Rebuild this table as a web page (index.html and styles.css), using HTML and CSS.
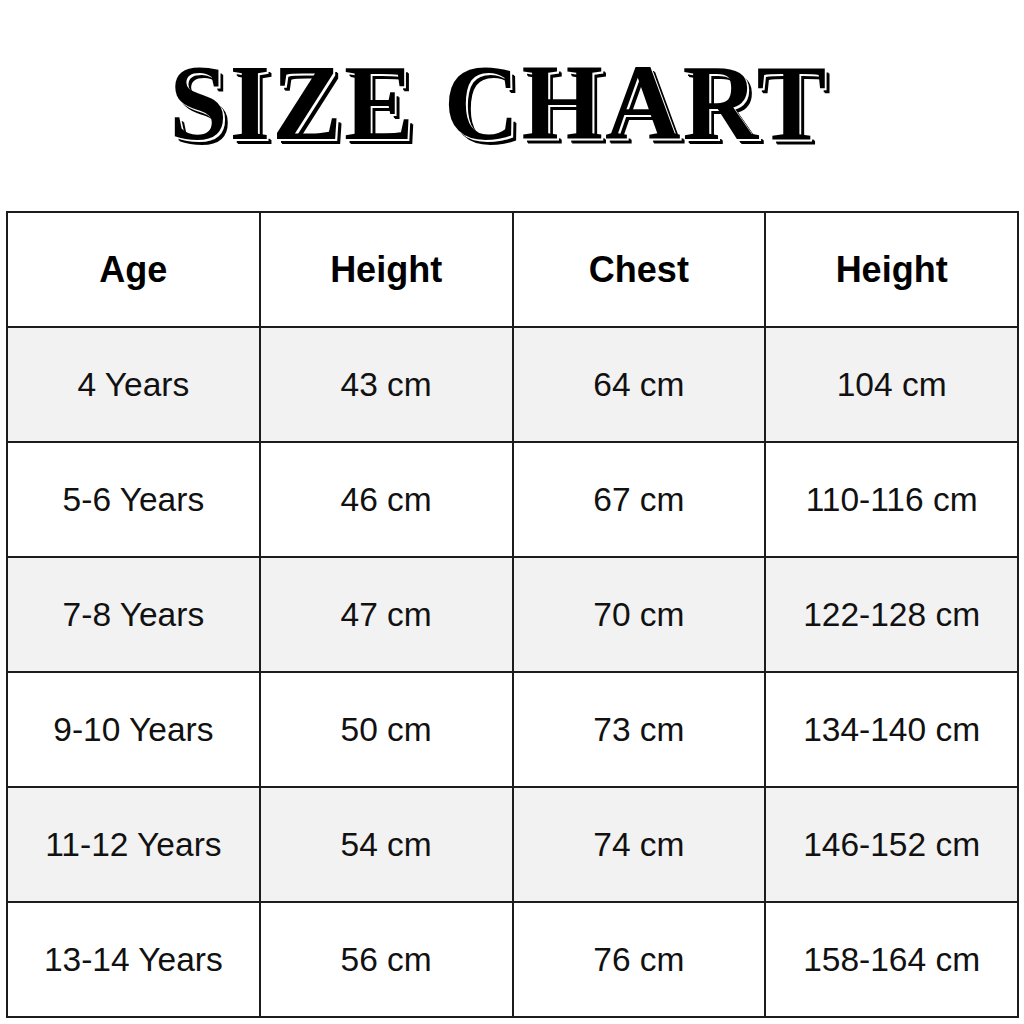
FILE: index.html
```html
<!DOCTYPE html>
<html>
<head>
<meta charset="utf-8">
<link rel="stylesheet" href="styles.css">
</head>
<body>
<div class="page">
  <header class="title-wrap">
    <h1 class="title">SIZE CHART</h1>
  </header>
  <table class="chart">
    <thead>
      <tr><th>Age</th><th>Height</th><th>Chest</th><th>Height</th></tr>
    </thead>
    <tbody>
      <tr class="alt"><td>4 Years</td><td>43 cm</td><td>64 cm</td><td>104 cm</td></tr>
      <tr><td>5-6 Years</td><td>46 cm</td><td>67 cm</td><td>110-116 cm</td></tr>
      <tr class="alt"><td>7-8 Years</td><td>47 cm</td><td>70 cm</td><td>122-128 cm</td></tr>
      <tr><td>9-10 Years</td><td>50 cm</td><td>73 cm</td><td>134-140 cm</td></tr>
      <tr class="alt"><td>11-12 Years</td><td>54 cm</td><td>74 cm</td><td>146-152 cm</td></tr>
      <tr><td>13-14 Years</td><td>56 cm</td><td>76 cm</td><td>158-164 cm</td></tr>
    </tbody>
  </table>
</div>
</body>
</html>
```
FILE: styles.css
```css
html, body {
  margin: 0;
  padding: 0;
  background: #ffffff;
}
.page {
  width: 1024px;
  height: 1024px;
  overflow: hidden;
}
.title-wrap {
  height: 211px;
  display: flex;
  align-items: flex-start;
  justify-content: center;
}
.title {
  margin: 0;
  margin-top: 42px;
  font-family: "Liberation Serif", "Times New Roman", serif;
  font-weight: bold;
  font-size: 108px;
  line-height: 122px;
  letter-spacing: 2px;
  color: #000;
  transform: translateX(-13px) scaleX(0.97);
  text-shadow: 2px 2px 0 #fff, 4px 4px 0 #000, 5px 5px 0 #000;
}
.chart {
  margin-left: 6px;
  width: 1013px;
  border-collapse: collapse;
  table-layout: fixed;
  font-family: "Liberation Sans", Arial, sans-serif;
  color: #111;
}
.chart th, .chart td {
  border: 2px solid #1c1c1c;
  text-align: center;
  vertical-align: middle;
  padding: 0;
  height: 115px;
  box-sizing: border-box;
}
.chart th {
  font-size: 36px;
  font-weight: bold;
  color: #000;
}
.chart td {
  font-size: 33.5px;
  font-weight: normal;
}
.chart tr.alt td {
  background: #f2f2f2;
}
```
